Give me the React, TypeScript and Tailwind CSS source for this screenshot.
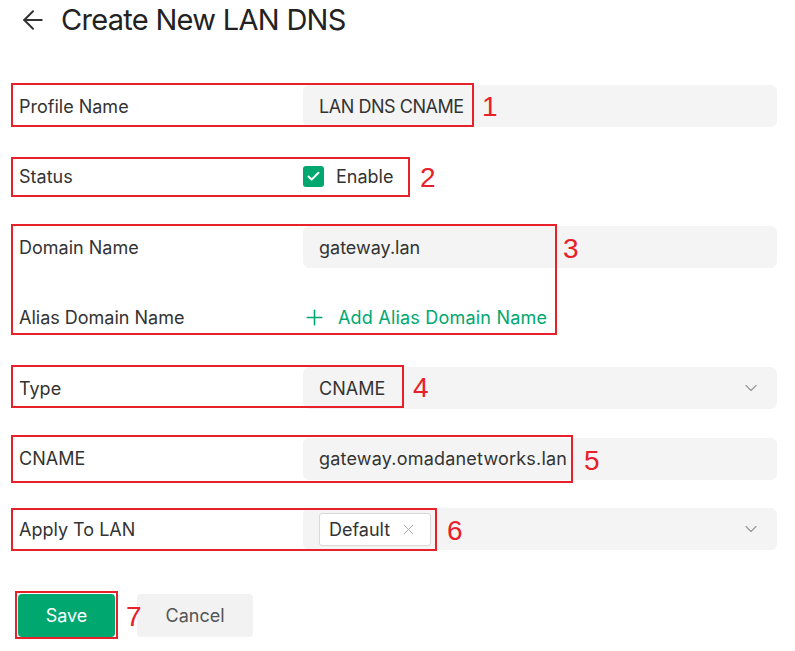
import { ArrowLeft, Check, ChevronDown, Plus, X } from "lucide-react";

const font = { fontFamily: "Inter, 'Noto Sans', sans-serif" };

function Mark({ n, className, numClass }: { n: string; className: string; numClass: string }) {
  return (
    <>
      <div className={`absolute border-2 border-[#e8202a] pointer-events-none ${className}`} />
      <span
        className={`absolute text-[28px] leading-none text-[#e8202a] ${numClass}`}
        style={{ fontFamily: "'Liberation Sans', Arial, sans-serif" }}
      >
        {n}
      </span>
    </>
  );
}

function Row({ label, children }: { label: string; children: React.ReactNode }) {
  return (
    <div className="flex items-center h-[42px]">
      <div className="w-[284px] shrink-0 text-[18px] text-[#333]">{label}</div>
      <div className="flex-1 h-full flex items-center">{children}</div>
    </div>
  );
}

function Field({ value, select }: { value: React.ReactNode; select?: boolean }) {
  return (
    <div className="flex-1 h-full bg-[#f4f4f4] rounded-md flex items-center pl-4 pr-[16px] text-[18px] text-[#333]">
      <div className="flex-1 flex items-center">{value}</div>
      {select && <ChevronDown size={20} strokeWidth={1.4} className="text-[#999]" />}
    </div>
  );
}

export default function App() {
  return (
    <div className="w-[795px] h-[651px] bg-white pl-[19px] pr-[18px]" style={font}>
      <div className="flex items-center h-[40px]">
        <ArrowLeft size={30} strokeWidth={1.6} className="text-[#333] -ml-[1px]" />
        <h1 className="ml-[13px] text-[29px] text-[#222] tracking-[-0.7px]">Create New LAN DNS</h1>
      </div>

      <div className="mt-[45px] flex flex-col gap-[28.5px]">
        <div className="relative">
          <Row label="Profile Name">
            <Field value={<span className="tracking-[-0.45px]">LAN DNS CNAME</span>} />
          </Row>
          <Mark n="1" className="-left-[8px] -top-[2px] w-[463px] h-[44px]" numClass="left-[463px] top-[8px]" />
        </div>

        <div className="relative">
          <Row label="Status">
            <div className="w-[21px] h-[21px] rounded-[3px] bg-[#00a870] flex items-center justify-center">
              <Check size={15} strokeWidth={3.2} className="text-white" />
            </div>
            <span className="ml-[12px] text-[18px] text-[#333]">Enable</span>
          </Row>
          <Mark n="2" className="-left-[8px] top-[1px] w-[399px] h-[40px]" numClass="left-[401px] top-[8px]" />
        </div>

        <div className="relative flex flex-col gap-[28.5px]">
          <Row label="Domain Name">
            <Field value="gateway.lan" />
          </Row>
          <Row label="Alias Domain Name">
            <div className="flex items-center text-[#00a870] text-[18px]">
              <Plus size={25} strokeWidth={1.5} className="-ml-[1px]" />
              <span className="ml-[11px] tracking-[0.2px]">Add Alias Domain Name</span>
            </div>
          </Row>
          <Mark n="3" className="-left-[8px] -top-[2px] w-[546px] h-[111px]" numClass="left-[544px] top-[9px]" />
        </div>

        <div className="relative">
          <Row label="Type">
            <Field value="CNAME" select />
          </Row>
          <Mark n="4" className="-left-[8px] -top-[2px] w-[393px] h-[43px]" numClass="left-[394px] top-[7px]" />
        </div>

        <div className="relative">
          <Row label="CNAME">
            <Field value={<span className="tracking-[0.2px]">gateway.omadanetworks.lan</span>} />
          </Row>
          <Mark n="5" className="-left-[8px] -top-[3px] w-[562px] h-[48px]" numClass="left-[565px] top-[9px]" />
        </div>

        <div className="relative">
          <Row label="Apply To LAN">
            <Field
              select
              value={
                <div className="flex items-center h-[33px] bg-white border border-[#d9d9d9] rounded-[3px] pl-[9px] pr-[13px] text-[18px] text-[#333]">
                  Default
                  <X size={17} strokeWidth={1.4} className="ml-[10px] text-[#aaa]" />
                </div>
              }
            />
          </Row>
          <Mark n="6" className="-left-[8px] top-0 w-[426px] h-[43px]" numClass="left-[428px] top-[9px]" />
        </div>
      </div>

      <div className="relative mt-[44px] flex items-center gap-[22px] -ml-[1px]">
        <button className="w-[97px] h-[43px] rounded-[4px] bg-[#00a870] text-white text-[18px]">Save</button>
        <button className="w-[116px] h-[43px] rounded-[4px] bg-[#f2f2f2] text-[#555] text-[18px]">Cancel</button>
        <Mark n="7" className="-left-[3px] -top-[3px] w-[103px] h-[48px]" numClass="left-[108px] top-[9px]" />
      </div>
    </div>
  );
}
